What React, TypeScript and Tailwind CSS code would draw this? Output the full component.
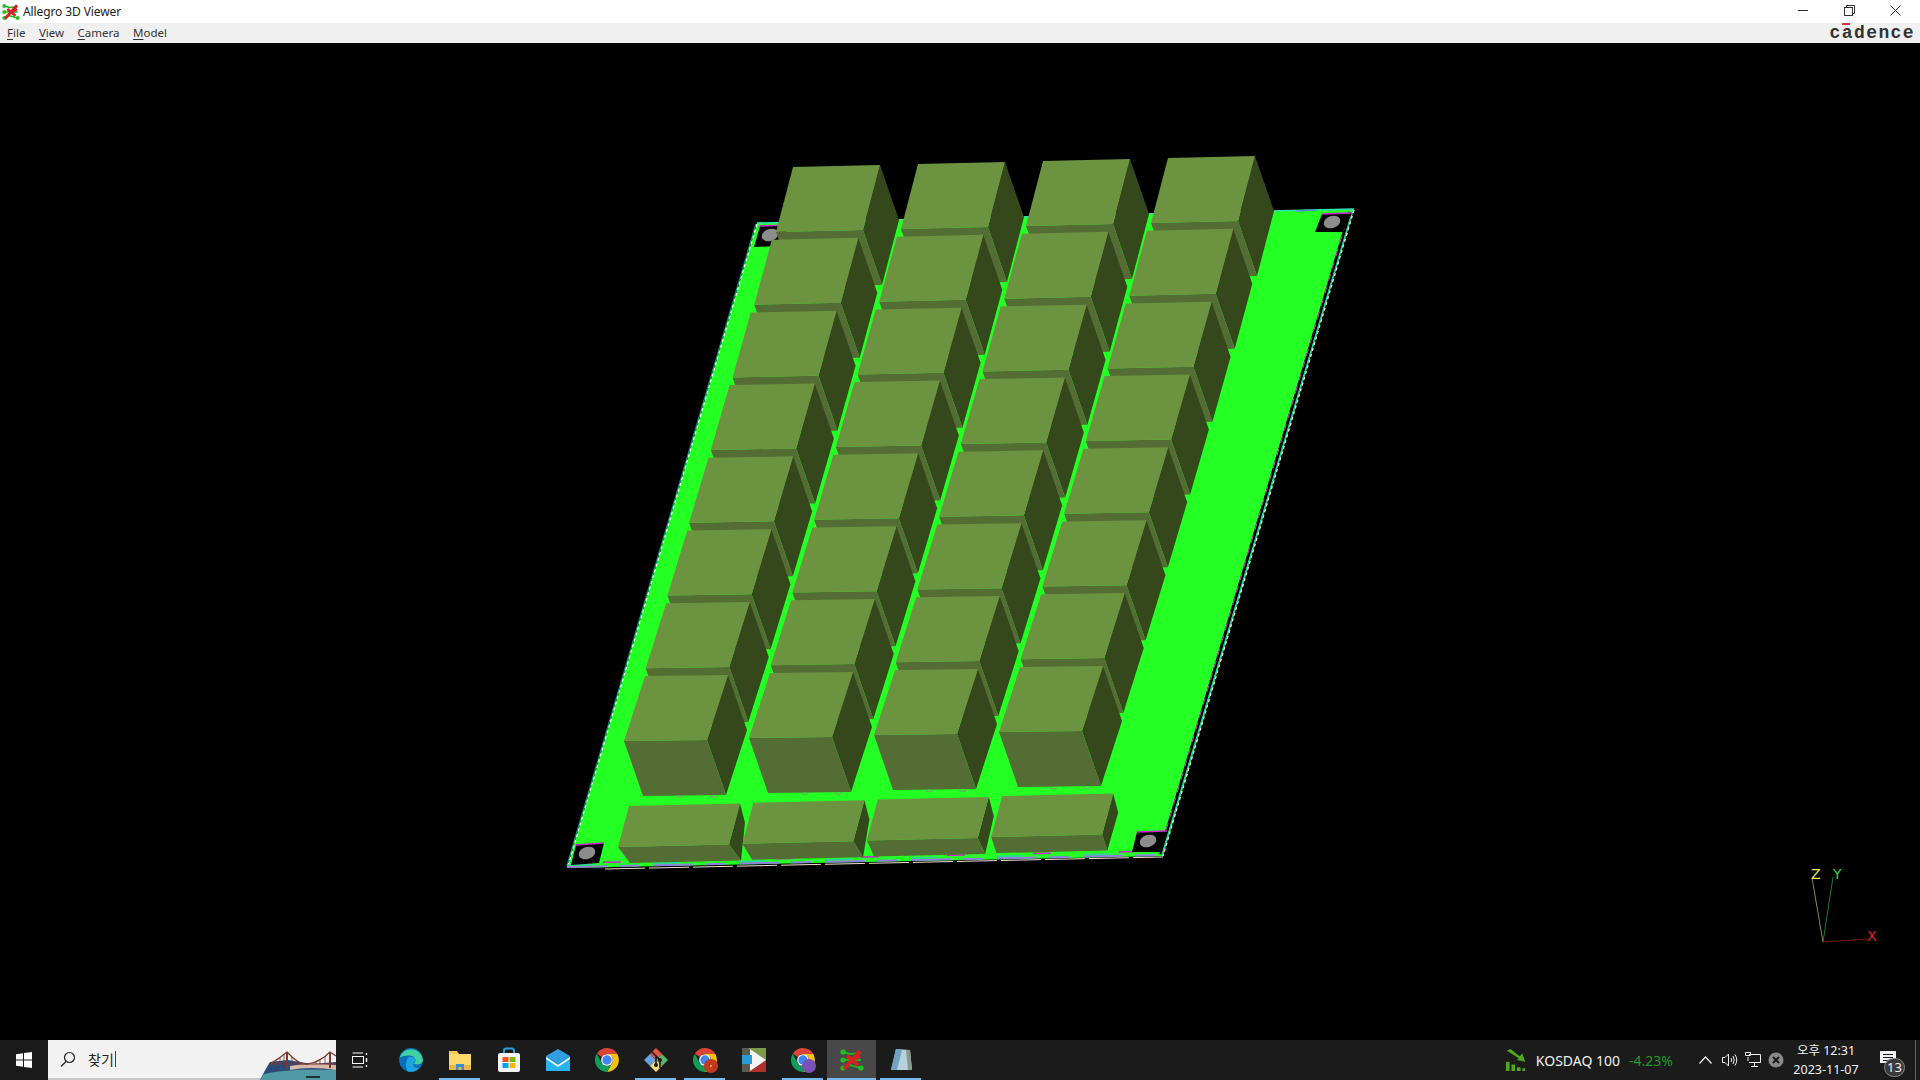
const TOP = "#6c9340";
const FRONT = "#546d34";
const SIDE = "#34481c";
const PCB = "#24ff24";

type Pt = [number, number];

const pts = (list: Pt[]) => list.map((p) => `${p[0]},${p[1]}`).join(" ");
const add = (a: Pt, b: Pt): Pt => [a[0] + b[0], a[1] + b[1]];

const Block = ({ tl, w, d, f, s }: { tl: Pt; w: Pt; d: Pt; f: Pt; s: Pt }) => {
  const tr = add(tl, w);
  const bl = add(tl, d);
  const br = add(bl, w);
  return (
    <g>
      <polygon points={pts([tr, add(tr, s), add(br, f), br])} fill={SIDE} />
      <polygon points={pts([bl, br, add(br, f), add(bl, f)])} fill={FRONT} />
      <polygon points={pts([tl, tr, br, bl])} fill={TOP} />
    </g>
  );
};

const Hole = ({ corners, cx, cy }: { corners: Pt[]; cx: number; cy: number }) => (
  <g>
    <polygon points={pts(corners)} fill="#000" />
    <line x1={corners[0][0]} y1={corners[0][1]} x2={corners[1][0]} y2={corners[1][1]} stroke="#d020d0" strokeWidth="1.5" />
    <ellipse cx={cx} cy={cy} rx="8.5" ry="6" fill="#8c8c8c" transform={`rotate(-18 ${cx} ${cy})`} />
  </g>
);

const Scene = () => {
  const rows = [0, 1, 2, 3, 4, 5, 6, 7];
  const cols = [0, 1, 2, 3];
  return (
    <svg viewBox="0 43 1920 997" width="1920" height="997" className="block">
      <polygon points="757,223 1354,209 1163,856 567,868" fill={PCB} />

      {/* board edge, dashes in several layer colours */}
      <line x1="756" y1="224" x2="567" y2="866" stroke="#158a70" strokeWidth="1.5" />
      <line x1="757" y1="224" x2="568" y2="866" stroke="#ffffff" strokeWidth="1.2" strokeDasharray="3 3" />
      <line x1="757" y1="223" x2="1354" y2="209" stroke="#30e0b0" strokeWidth="1.5" />
      <line x1="1296" y1="211" x2="1316" y2="210" stroke="#5090d0" strokeWidth="1.5" />
      <line x1="1350" y1="212" x2="1160" y2="854" stroke="#000" strokeWidth="3" />
      <line x1="1349" y1="212" x2="1159" y2="854" stroke="#d040d0" strokeWidth="1" strokeDasharray="7 6" />
      <line x1="1353" y1="210" x2="1162" y2="856" stroke="#20c8b0" strokeWidth="1.2" />
      <line x1="1354" y1="210" x2="1163" y2="856" stroke="#ffffff" strokeWidth="1.2" strokeDasharray="3 3" />
      <line x1="567" y1="867" x2="1163" y2="855" stroke="#8f80e0" strokeWidth="2" strokeDasharray="40 12 20 14" />
      <line x1="567" y1="865" x2="1163" y2="853" stroke="#30d0a0" strokeWidth="1.5" strokeDasharray="26 60" />
      <line x1="605" y1="869" x2="1163" y2="857" stroke="#f0e0d0" strokeWidth="1" strokeDasharray="40 4" />
      <line x1="567" y1="863" x2="1163" y2="851" stroke="#d020d0" strokeWidth="1.5" strokeDasharray="18 68" strokeDashoffset="-36" />

      <Hole corners={[[760, 226], [790, 225], [778, 246], [754, 247]]} cx={770} cy={235} />
      <Hole corners={[[1322, 214], [1352, 213], [1343, 232], [1315, 232]]} cx={1332} cy={222} />
      <Hole corners={[[576, 845], [604, 843], [599, 863], [571, 865]]} cx={587} cy={853} />
      <Hole corners={[[1137, 832], [1167, 831], [1162, 852], [1132, 852]]} cx={1148} cy={841} />

      {/* tall parts, painted from the back row forward */}
      {rows.map((r) =>
        cols.map((c) => (
          <Block
            key={`${r}-${c}`}
            tl={[793 + 125 * c - 21.14 * r, 167 - 3 * c + 72.7 * r]}
            w={[87 - (4 * r) / 7, -2 + r / 7]}
            d={[-17 - (4 * r) / 7, 65]}
            f={[19, 55]}
            s={[19, 55]}
          />
        )),
      )}

      {/* pin stubs under the front row */}
      {cols.map((c) => (
        <g key={c} fill="none" stroke="#7f9a70" strokeWidth="1">
          <path d={`M${676 + 124.5 * c} ${796 - 2.8 * c} q4 3 8 0`} />
          <path d={`M${710 + 124.5 * c} ${796 - 2.8 * c} q4 3 8 0`} />
        </g>
      ))}

      {/* short row at the board front */}
      {cols.map((c) => (
        <Block
          key={c}
          tl={[629 + 124.4 * c, 806 - 3.3 * c]}
          w={[111, -2.5]}
          d={[-11, 41]}
          f={[12 - 2.3 * c, 16]}
          s={[5, 19]}
        />
      ))}

      {/* axis triad */}
      <line x1="1823" y1="942" x2="1812" y2="878" stroke="#7f8f40" />
      <line x1="1823" y1="942" x2="1833" y2="877" stroke="#1c7a2c" />
      <line x1="1823" y1="942" x2="1868" y2="939" stroke="#7a1818" />
      <text x="1811" y="879" fontSize="14" fill="#f0e868" fontFamily="'DejaVu Sans', sans-serif">Z</text>
      <text x="1833" y="879" fontSize="14" fill="#30d040" fontFamily="'DejaVu Sans', sans-serif">Y</text>
      <text x="1867" y="941" fontSize="14" fill="#e02020" fontFamily="'DejaVu Sans', sans-serif">X</text>
    </svg>
  );
};

const AllegroLogo = ({ size }: { size: number }) => (
  <svg width={size} height={size} viewBox="0 0 24 24">
    <g stroke="#20b020" strokeWidth="2" fill="none">
      <path d="M3 4 L10 6 L21 5" />
      <path d="M3 12 L11 12 L21 12" />
      <path d="M3 20 L10 17 L21 20" />
    </g>
    <g fill="#20c020">
      <circle cx="3" cy="4" r="2.6" />
      <circle cx="3" cy="12" r="2.6" />
      <circle cx="3" cy="20" r="2.6" />
      <circle cx="21" cy="20" r="2.6" />
    </g>
    <path d="M4 21 L20 3 M7 8 L18 17 M11 13 L20 8" stroke="#d82020" strokeWidth="3.6" fill="none" />
  </svg>
);

const Chrome = ({ children }: { children?: React.ReactNode }) => (
  <svg width="26" height="26" viewBox="0 0 24 24">
    <path d="M12 1 A11 11 0 0 1 21.5 6.5 L12 6.5 A5.5 5.5 0 0 0 7.2 9.2 L2.6 6.2 A11 11 0 0 1 12 1Z" fill="#db4437" />
    <path d="M21.5 6.5 A11 11 0 0 1 12 23 L16.8 14.8 A5.5 5.5 0 0 0 16.8 9.2 L12 6.5Z" fill="#f4c20d" />
    <path d="M2.6 6.2 A11 11 0 0 0 12 23 L16.8 14.8 A5.5 5.5 0 0 1 7.2 14.8Z" fill="#0f9d58" />
    <circle cx="12" cy="12" r="5.4" fill="#fff" />
    <circle cx="12" cy="12" r="4.3" fill="#4285f4" />
    {children}
  </svg>
);

const Edge = () => (
  <svg width="26" height="26" viewBox="0 0 24 24">
    <circle cx="12" cy="12" r="11" fill="#0c6cb8" />
    <path d="M1.5 10 A11 11 0 0 1 23 12 C23 16 17 17 14.5 15.5 C17 14 17 9 12 8 C7 7.5 3 9 1.5 10Z" fill="#3fd2a0" />
    <path d="M8 13 C8 9 13 8 15 10 C16 11 16 13 14.5 15 C13 19 17 20 20 19 A11 11 0 0 1 9 22.5 C7 19 7 16 8 13Z" fill="#1ea5e0" />
  </svg>
);

const Folder = () => (
  <svg width="24" height="22" viewBox="0 0 24 22">
    <path d="M1 2 H9 L11 5 H23 V21 H1Z" fill="#f6c94e" />
    <rect x="1" y="5" width="22" height="16" fill="#fbd96e" />
    <rect x="1" y="16" width="22" height="5" fill="#e8b840" />
    <path d="M8 21 V15 H16 V21 H13.5 V18 H10.5 V21Z" fill="#3a8fd0" />
  </svg>
);

const Store = () => (
  <svg width="24" height="26" viewBox="0 0 24 26">
    <path d="M7 7 V3.5 Q7 1.5 9 1.5 H15 Q17 1.5 17 3.5 V7" fill="none" stroke="#2aa0dc" strokeWidth="2" />
    <rect x="1" y="6" width="22" height="19" rx="2" fill="#f4f4f4" />
    <rect x="5.5" y="10" width="6" height="5" fill="#f25022" />
    <rect x="12.5" y="10" width="6" height="5" fill="#7fba00" />
    <rect x="5.5" y="16" width="6" height="5" fill="#00a4ef" />
    <rect x="12.5" y="16" width="6" height="5" fill="#ffb900" />
  </svg>
);

const Mail = () => (
  <svg width="26" height="24" viewBox="0 0 26 24">
    <path d="M1 8 L13 1 L25 8 L13 16Z" fill="#2f9fe0" />
    <path d="M1 8 L13 16 L25 8 V23 H1Z" fill="#28b4ee" />
    <path d="M1 9 L13 17 L25 9 V11 L13 19 L1 11Z" fill="#f4f8fc" />
  </svg>
);

const GitKraken = () => (
  <svg width="26" height="26" viewBox="0 0 26 26">
    <path d="M1 13 L7 7 L13 13 L7 19Z" fill="#6a9fe0" />
    <path d="M7 7 L13 1 L19 7 L13 13Z" fill="#e0584c" />
    <path d="M13 13 L19 7 L25 13 L19 19Z" fill="#58b868" />
    <path d="M7 19 L13 13 L19 19 L13 25Z" fill="#f0dc80" />
    <path d="M9 5 L17 13 M17 13 V21 M13 9 L13 17" stroke="#1a1a1a" strokeWidth="1.6" />
    <circle cx="17" cy="13" r="2" fill="#1a1a1a" />
    <circle cx="13" cy="18" r="2" fill="#1a1a1a" />
  </svg>
);

const Player = () => (
  <svg width="24" height="24" viewBox="0 0 24 24">
    <rect width="24" height="24" fill="#5c5c4c" />
    <path d="M0 0 H24 V12 L6 0Z" fill="#7a9a48" />
    <path d="M0 24 H24 V12 L6 24Z" fill="#b03030" />
    <path d="M8 1 L24 12 L8 23Z" fill="#f4f4f4" />
    <rect x="0" y="7" width="10" height="9" fill="#2a9ad8" />
  </svg>
);

const Notepad = () => (
  <svg width="24" height="26" viewBox="0 0 24 26">
    <path d="M7 2 L21 3 L23 23 L2 23Z" fill="#b8d0de" />
    <path d="M7 2 L13 3 L8 23 L2 23Z" fill="#6fa4c0" />
    <path d="M17 3 L21 3 L23 23 L19 23Z" fill="#8a9a8a" />
  </svg>
);

const WinLogo = () => (
  <svg width="16" height="16" viewBox="0 0 16 16" fill="#fff">
    <path d="M0 2.2 L7 1.2 V7.5 H0Z" />
    <path d="M8 1 L16 0 V7.5 H8Z" />
    <path d="M0 8.5 H7 V14.8 L0 13.8Z" />
    <path d="M8 8.5 H16 V16 L8 15Z" />
  </svg>
);

const Bridge = () => (
  <svg width="76" height="40" viewBox="0 0 76 40" className="absolute right-0 top-0">
    <path d="M10 22 L28 20 L52 24 L76 22 V40 H0 Q6 28 10 22Z" fill="#2a4a78" />
    <path d="M4 34 Q30 28 76 30 V40 H0Z" fill="#4f9aa4" />
    <path d="M30 26 Q50 22 76 25 V30 Q50 26 30 30Z" fill="#d8b8a8" />
    <g stroke="#7a3a30" fill="none" strokeWidth="1.2">
      <path d="M10 24 H76" />
      <path d="M27 12 V28 M70 12 V28" strokeWidth="2" />
      <path d="M10 24 Q20 18 27 12 Q40 26 48 24 Q60 22 70 12 L76 16" />
      <path d="M16 20 V24 M20 17 V24 M24 14 V24 M32 17 V24 M37 21 V24 M56 21 V24 M60 19 V24 M65 16 V24" strokeWidth="0.8" />
    </g>
    <rect x="46" y="36" width="14" height="2" fill="#203040" />
  </svg>
);

const TaskIcon = ({
  children,
  open,
  active,
}: {
  children: React.ReactNode;
  open?: boolean;
  active?: boolean;
}) => (
  <div className={`relative flex h-full w-[49px] items-center justify-center ${active ? "bg-[#484848]" : ""}`}>
    {children}
    {open && <div className={`absolute bottom-0 h-[2px] bg-[#76b9ed] ${active ? "inset-x-0" : "inset-x-[4px]"}`} />}
  </div>
);

const MenuItem = ({ first, rest }: { first: string; rest: string }) => (
  <span>
    <span className="underline underline-offset-2">{first}</span>
    {rest}
  </span>
);

export default function App() {
  return (
    <div className="flex h-screen w-[1920px] flex-col overflow-hidden bg-black font-['Noto_Sans','Noto_Sans_CJK_KR',sans-serif]">
      {/* title bar */}
      <div className="flex h-[23px] items-center bg-white pl-[2px]">
        <AllegroLogo size={18} />
        <span className="ml-[3px] text-[12px] tracking-[-0.1px] text-[#222]">Allegro 3D Viewer</span>
        <div className="ml-auto flex h-full items-center pb-[3px] pr-[2px]">
          <div className="flex w-[46px] justify-center">
            <div className="h-px w-[10px] bg-[#333]" />
          </div>
          <div className="flex w-[46px] justify-center">
            <svg width="11" height="11" viewBox="0 0 11 11" fill="none" stroke="#333">
              <rect x="0.5" y="2.5" width="8" height="8" />
              <path d="M2.5 2.5 V0.5 H10.5 V8.5 H8.5" />
            </svg>
          </div>
          <div className="flex w-[46px] justify-center">
            <svg width="11" height="11" viewBox="0 0 11 11" stroke="#333">
              <path d="M0.5 0.5 L10.5 10.5 M10.5 0.5 L0.5 10.5" />
            </svg>
          </div>
        </div>
      </div>

      {/* menu bar */}
      <div className="flex h-[20px] items-center justify-between bg-[#f0f0f0] pl-[7px] pr-[5px] text-[11.5px] leading-none text-[#333]">
        <div className="flex gap-[13.5px]">
          <MenuItem first="F" rest="ile" />
          <MenuItem first="V" rest="iew" />
          <MenuItem first="C" rest="amera" />
          <MenuItem first="M" rest="odel" />
        </div>
        <div className="relative font-['Liberation_Mono',monospace] text-[18px] font-bold leading-none tracking-[1.4px] text-[#333]">
          cadence
          <div className="absolute left-[12px] top-[-1px] h-[2px] w-[8px] bg-[#d8323c]" />
        </div>
      </div>

      {/* 3D view */}
      <div className="h-[997px] shrink-0">
        <Scene />
      </div>

      {/* taskbar */}
      <div className="flex h-[40px] shrink-0 items-center bg-[#1b1b1b] text-white">
        <div className="flex h-full w-[48px] items-center justify-center">
          <WinLogo />
        </div>
        <div className="relative flex h-full w-[288px] items-center border-b-2 border-[#c8c8c8] bg-[#f2f2f2] pl-[12px] text-[#222]">
          <svg width="16" height="16" viewBox="0 0 16 16" fill="none" stroke="#222" strokeWidth="1.2">
            <circle cx="9.5" cy="6.5" r="5" />
            <path d="M6 10.5 L1 15.5" />
          </svg>
          <span className="ml-[12px] text-[14px]">찾기</span>
          <div className="ml-px h-[16px] w-px bg-[#444]" />
          <Bridge />
        </div>
        <div className="flex h-full w-[50px] items-center justify-center pr-[2px]">
          <svg width="16" height="16" viewBox="0 0 16 16" fill="none" stroke="#fff">
            <path d="M0.5 1 H11 M0.5 15 H11" />
            <rect x="0.5" y="4.5" width="11" height="7" />
            <path d="M14.5 1 V3 M14.5 6 V10 M14.5 13 V15" strokeWidth="1.4" />
          </svg>
        </div>
        <TaskIcon><Edge /></TaskIcon>
        <TaskIcon open><Folder /></TaskIcon>
        <TaskIcon><Store /></TaskIcon>
        <TaskIcon><Mail /></TaskIcon>
        <TaskIcon><Chrome /></TaskIcon>
        <TaskIcon open><GitKraken /></TaskIcon>
        <TaskIcon open>
          <Chrome>
            <circle cx="17.5" cy="17.5" r="6.5" fill="#c0391b" />
            <circle cx="17.5" cy="17.5" r="0.9" fill="#f0c0a0" />
          </Chrome>
        </TaskIcon>
        <TaskIcon><Player /></TaskIcon>
        <TaskIcon open>
          <Chrome>
            <circle cx="17.5" cy="17.5" r="6.5" fill="#7a52b8" />
          </Chrome>
        </TaskIcon>
        <TaskIcon open active><AllegroLogo size={24} /></TaskIcon>
        <TaskIcon open><Notepad /></TaskIcon>

        {/* tray */}
        <div className="ml-auto flex h-full items-center text-[#f0f0f0]">
          <svg width="22" height="24" viewBox="0 0 24 24" fill="#4fa81e">
            <path d="M2 2 L6 0 L16 8 L19 5 L22 14 L13 12 L15 10Z" />
            <rect x="1" y="14" width="4" height="10" />
            <rect x="7" y="17" width="4" height="7" />
            <rect x="13" y="20" width="4" height="4" />
            <rect x="19" y="21" width="3" height="3" />
          </svg>
          <span className="ml-[9px] text-[14px]">KOSDAQ 100</span>
          <span className="ml-[9px] text-[14px] text-[#1e9c2a]">-4.23%</span>
          <svg className="ml-[26px]" width="13" height="8" viewBox="0 0 13 8" fill="none" stroke="#f0f0f0" strokeWidth="1.2">
            <path d="M0.5 7.5 L6.5 1 L12.5 7.5" />
          </svg>
          <svg className="ml-[10px]" width="16" height="14" viewBox="0 0 16 14" fill="none" stroke="#f0f0f0">
            <path d="M0.5 4.5 H3 L6.5 1 V13 L3 9.5 H0.5Z" />
            <path d="M9 5 Q10.5 7 9 9 M11 3 Q13.5 7 11 11 M13 1.5 Q16.5 7 13 12.5" />
          </svg>
          <svg className="ml-[7px]" width="16" height="16" viewBox="0 0 16 16" fill="none" stroke="#f0f0f0">
            <path d="M4 2.5 H15.5 V10.5 H4" />
            <path d="M0.5 0.5 H5.5 V3.5 H0.5Z M2 6 H4 M2 8 H4" />
            <path d="M9.5 10.5 V14 M6 14.5 H13" />
          </svg>
          <svg className="ml-[7px]" width="16" height="16" viewBox="0 0 16 16">
            <circle cx="8" cy="8" r="7.5" fill="#8a8a8a" />
            <path d="M5 5 L11 11 M11 5 L5 11" stroke="#1b1b1b" strokeWidth="2" />
          </svg>
          <div className="ml-[2px] flex w-[80px] flex-col items-center text-[12.5px] leading-[19px]">
            <span>오후 12:31</span>
            <span>2023-11-07</span>
          </div>
          <div className="relative ml-[11px] h-full w-[43px]">
            <svg className="absolute left-[3px] top-[11px]" width="16" height="15" viewBox="0 0 16 15" fill="#f4f4f4">
              <path d="M0 0 H16 V12 H0Z" />
              <path d="M3 3.5 H13 M3 6.5 H13 M3 9.5 H10" stroke="#1b1b1b" />
            </svg>
            <div className="absolute left-[7px] top-[18px] flex h-[19px] w-[21px] items-center justify-center rounded-full border border-[#888] bg-[#3a3a3a] text-[13px] leading-none">
              13
            </div>
            <div className="absolute right-[4px] top-0 h-full w-px bg-[#666]" />
          </div>
        </div>
      </div>
    </div>
  );
}
